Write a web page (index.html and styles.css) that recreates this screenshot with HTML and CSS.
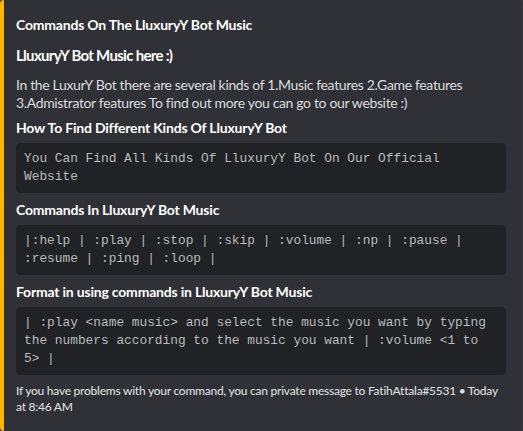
FILE: index.html
```html
<!DOCTYPE html>
<html>
<head>
<meta charset="utf-8">
<link rel="stylesheet" href="styles.css">
</head>
<body>
<div class="embed">
  <div class="author">Commands On The LluxuryY Bot Music</div>
  <div class="title">LluxuryY Bot Music here :)</div>
  <div class="desc">In the LuxurY Bot there are several kinds of 1.Music features 2.Game features 3.Admistrator features To find out more you can go to our website :)</div>
  <div class="fields">
    <div class="field">
      <div class="fname">How To Find Different Kinds Of LluxuryY Bot</div>
      <pre class="code">You Can Find All Kinds Of LluxuryY Bot On Our Official Website</pre>
    </div>
    <div class="field">
      <div class="fname">Commands In LluxuryY Bot Music</div>
      <pre class="code">|:help | :play | :stop | :skip | :volume | :np | :pause | :resume | :ping | :loop |</pre>
    </div>
    <div class="field">
      <div class="fname">Format in using commands in LluxuryY Bot Music</div>
      <pre class="code">| :play &lt;name music&gt; and select the music you want by typing the numbers according to the music you want | :volume &lt;1 to 5&gt; |</pre>
    </div>
  </div>
  <div class="footer">If you have problems with your command, you can private message to FatihAttala#5531 • Today at 8:46 AM</div>
</div>
</body>
</html>
```
FILE: styles.css
```css
* { box-sizing: border-box; }
html, body { margin: 0; padding: 0; }
body {
  background: #36393f;
  width: 523px;
  height: 431px;
  font-family: Lato, "Noto Sans", sans-serif;
  color: #dcddde;
}
.embed {
  width: 522px;
  background: #2f3136;
  border-left: 4px solid #fcb500;
  border-radius: 4px;
  padding: 8px 16px 16px 12px;
  display: flex;
  flex-direction: column;
}
.author {
  margin-top: 8px;
  font-size: 14px;
  line-height: 18px;
  font-weight: 700;
  letter-spacing: -0.2px;
  color: #ffffff;
}
.title {
  margin-top: 10px;
  font-size: 15px;
  line-height: 22px;
  font-weight: 700;
  letter-spacing: -0.7px;
  color: #ffffff;
}
.desc {
  margin-top: 10px;
  font-size: 14px;
  line-height: 18px;
  letter-spacing: -0.35px;
  color: #dcddde;
}
.fields {
  margin-top: 7px;
  display: flex;
  flex-direction: column;
  gap: 8px;
}
.fname {
  font-size: 14px;
  line-height: 18px;
  font-weight: 700;
  letter-spacing: -0.2px;
  color: #ffffff;
}
.code {
  margin: 6px 0 0 0;
  background: #202225;
  border: 1px solid #202225;
  border-radius: 4px;
  padding: 6px 7px;
  font-family: "Liberation Mono", monospace;
  font-size: 12.84px;
  line-height: 18px;
  color: #b9bbbe;
  white-space: pre-wrap;
}
.footer {
  margin-top: 8px;
  font-size: 12px;
  line-height: 16px;
  font-weight: 500;
  letter-spacing: -0.25px;
  color: #dcddde;
}
```
